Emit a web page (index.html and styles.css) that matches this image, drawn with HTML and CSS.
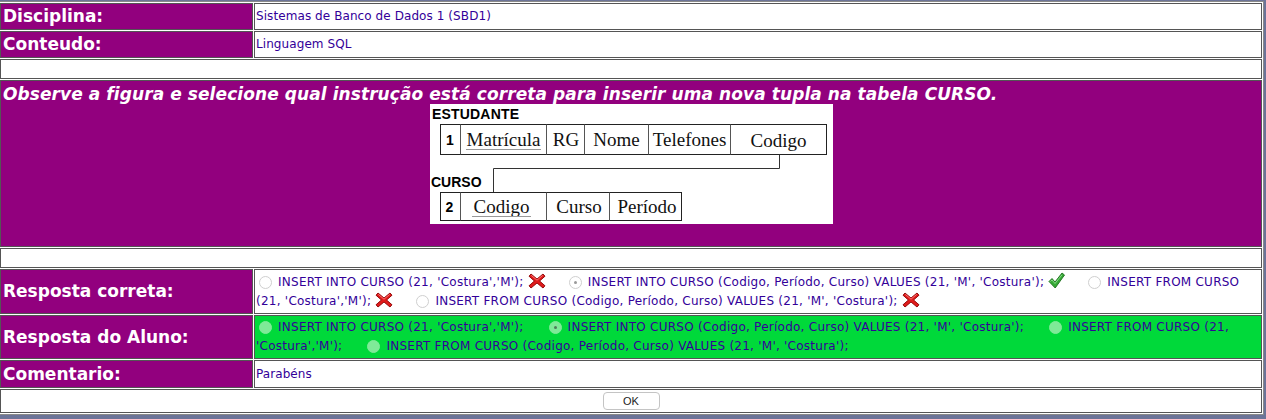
FILE: index.html
```html
<!DOCTYPE html>
<html lang="pt">
<head>
<meta charset="utf-8">
<title>Resposta</title>
<link rel="stylesheet" href="styles.css">
</head>
<body>
<div class="page">
<table class="sheet">
  <tr>
    <td class="lbl">Disciplina:</td>
    <td class="val">Sistemas de Banco de Dados 1 (SBD1)</td>
  </tr>
  <tr>
    <td class="lbl">Conteudo:</td>
    <td class="val">Linguagem SQL</td>
  </tr>
  <tr>
    <td class="blank" colspan="2">&nbsp;</td>
  </tr>
  <tr>
    <td class="question" colspan="2">
      <div class="qtext">Observe a figura e selecione qual instrução está correta para inserir uma nova tupla na tabela CURSO.</div>
      <div class="figure">
        <svg class="fig" width="403" height="120" viewBox="0 0 403 120">
          <rect width="403" height="120" fill="#fff"/>
          <text x="2" y="15" class="fl" textLength="87">ESTUDANTE</text>
          <rect x="10.5" y="20.5" width="386" height="30" fill="none" stroke="#222"/>
          <path d="M30.5 20.5V50.5M116.5 20.5V50.5M154.5 20.5V50.5M218.5 20.5V50.5M300.5 20.5V50.5" stroke="#555" fill="none"/>
          <text x="20" y="41" class="fn">1</text>
          <text x="73.5" y="41.5" class="ft">Matrícula</text>
          <line x1="36" y1="45.5" x2="111" y2="45.5" stroke="#999"/>
          <text x="136" y="41.5" class="ft">RG</text>
          <text x="186.5" y="41.5" class="ft">Nome</text>
          <text x="259.5" y="41.5" class="ft">Telefones</text>
          <text x="348.5" y="43" class="ft">Codigo</text>
          <path d="M349.5 50.5V64.5H63.5V88" stroke="#333" fill="none"/>
          <text x="1" y="83" class="fl">CURSO</text>
          <rect x="10.5" y="88.5" width="241" height="28" fill="none" stroke="#222"/>
          <path d="M30.5 88.5V116.5M116.5 88.5V116.5M179.5 88.5V116.5" stroke="#555" fill="none"/>
          <text x="19.5" y="108" class="fn">2</text>
          <text x="71.5" y="109" class="ft">Codigo</text>
          <line x1="42" y1="112.5" x2="101" y2="112.5" stroke="#999"/>
          <text x="149" y="109" class="ft">Curso</text>
          <text x="217" y="109" class="ft">Período</text>
        </svg>
      </div>
    </td>
  </tr>
  <tr>
    <td class="blank" colspan="2">&nbsp;</td>
  </tr>
  <tr>
    <td class="lbl">Resposta correta:</td>
    <td class="val ans"><span class="radio first"></span>INSERT INTO CURSO (21, 'Costura','M'); <svg class="ico" width="18" height="16" viewBox="0 0 18 16"><path d="M3 1L9 6L15 1L17 3.2L11.6 8L17 12.8L15 15L9 10L3 15L1 12.8L6.4 8L1 3.2Z" fill="#e01b1b" stroke="#8c0000" stroke-width="0.9" stroke-linejoin="round"/><path d="M3.3 2.4L9 7.2L14.7 2.4" fill="none" stroke="#ff7a7a" stroke-width="0.9"/></svg> <span class="radio checked"></span>INSERT INTO CURSO (Codigo, Período, Curso) VALUES (21, 'M', 'Costura'); <svg class="ico" width="17" height="17" viewBox="0 0 17 17"><path d="M1 9.5L4 6.5L7 10L14 1L16.5 3L7.2 16Z" fill="#35a935" stroke="#1c6e1c" stroke-width="0.9" stroke-linejoin="round"/><path d="M2.5 9.5L4 8L7 11.5L14 2.8" fill="none" stroke="#8fe08f" stroke-width="0.9"/></svg> <span class="radio"></span>INSERT FROM CURSO (21, 'Costura','M'); <svg class="ico" width="18" height="16" viewBox="0 0 18 16"><path d="M3 1L9 6L15 1L17 3.2L11.6 8L17 12.8L15 15L9 10L3 15L1 12.8L6.4 8L1 3.2Z" fill="#e01b1b" stroke="#8c0000" stroke-width="0.9" stroke-linejoin="round"/><path d="M3.3 2.4L9 7.2L14.7 2.4" fill="none" stroke="#ff7a7a" stroke-width="0.9"/></svg> <span class="radio"></span>INSERT FROM CURSO (Codigo, Período, Curso) VALUES (21, 'M', 'Costura'); <svg class="ico" width="18" height="16" viewBox="0 0 18 16"><path d="M3 1L9 6L15 1L17 3.2L11.6 8L17 12.8L15 15L9 10L3 15L1 12.8L6.4 8L1 3.2Z" fill="#e01b1b" stroke="#8c0000" stroke-width="0.9" stroke-linejoin="round"/><path d="M3.3 2.4L9 7.2L14.7 2.4" fill="none" stroke="#ff7a7a" stroke-width="0.9"/></svg></td>
  </tr>
  <tr>
    <td class="lbl">Resposta do Aluno:</td>
    <td class="val ans green"><span class="radio first"></span>INSERT INTO CURSO (21, 'Costura','M'); <span class="radio wide checked"></span>INSERT INTO CURSO (Codigo, Período, Curso) VALUES (21, 'M', 'Costura'); <span class="radio wide"></span>INSERT FROM CURSO (21, 'Costura','M'); <span class="radio wide"></span>INSERT FROM CURSO (Codigo, Período, Curso) VALUES (21, 'M', 'Costura');</td>
  </tr>
  <tr>
    <td class="lbl tall">Comentario:</td>
    <td class="val">Parabéns</td>
  </tr>
  <tr>
    <td class="foot" colspan="2"><button class="ok" type="button">OK</button></td>
  </tr>
</table>
</div>
</body>
</html>
```

FILE: styles.css
```css
html, body {
  margin: 0;
  padding: 0;
}

body {
  background: #6c7498;
  font-family: "DejaVu Sans", Verdana, sans-serif;
  height: 419px;
  overflow: hidden;
}

.page {
  padding-top: 1px;
}

.sheet {
  width: 1266px;
  margin-left: -2px;
  border-collapse: separate;
  border-spacing: 1px;
  border: 1px solid #8a8a8a;
  background: #fff;
}

.sheet td {
  border: 1px solid #555;
  padding: 2px;
  vertical-align: middle;
}

.lbl {
  width: 253px;
  box-sizing: border-box;
  background: #92007e;
  color: #fff;
  font-weight: bold;
  font-size: 17px;
  line-height: 21px;
  white-space: nowrap;
}

.lbl.tall {
  line-height: 22px;
}

.val {
  background: #fff;
  color: #330099;
  font-size: 12px;
  line-height: 21px;
  letter-spacing: 0.08px;
  padding-left: 1px !important;
}

.blank {
  font-size: 12px;
  line-height: 14px;
}

.question {
  background: #92007e;
  color: #fff;
  padding-top: 3px !important;
  padding-bottom: 22px !important;
}

.qtext {
  font-weight: bold;
  font-style: italic;
  font-size: 17px;
  line-height: 20px;
  letter-spacing: 0.08px;
}

.figure {
  display: flex;
  justify-content: center;
}

.fig {
  display: block;
}

.fl {
  font-family: "Liberation Sans", Arial, sans-serif;
  font-weight: bold;
  font-size: 14px;
  fill: #000;
}

.fn {
  font-family: "Liberation Sans", Arial, sans-serif;
  font-weight: bold;
  font-size: 14px;
  fill: #000;
  text-anchor: middle;
}

.ft {
  font-family: "Liberation Serif", "Times New Roman", serif;
  font-size: 19px;
  fill: #111;
  text-anchor: middle;
}

.ans {
  line-height: 19px;
  letter-spacing: 0.25px;
}

.green {
  background: #00d93a;
}

.radio {
  display: inline-block;
  box-sizing: border-box;
  width: 13px;
  height: 13px;
  border-radius: 50%;
  border: 1px solid #cfcfcf;
  background: #fff;
  vertical-align: -3px;
  margin: 0 6px 0 19px;
  position: relative;
}

.radio.first {
  margin-left: 3px;
}

.radio.wide {
  margin-left: 21px;
}

.radio.checked::after {
  content: "";
  position: absolute;
  left: 4px;
  top: 4px;
  width: 3px;
  height: 3px;
  border-radius: 50%;
  background: #9a9a9a;
}

.green .radio {
  background: #7fea98;
  border-color: #7fea98;
}

.green .radio.checked::after {
  background: #4f7d5a;
}

.ico {
  display: inline-block;
  vertical-align: -3px;
}

.foot {
  text-align: center;
  padding: 2px !important;
  line-height: 0;
}

.ok {
  width: 57px;
  height: 18px;
  padding: 0;
  margin: 0;
  border: 1px solid #c4c4c4;
  border-radius: 4px;
  background: #fff;
  color: #222;
  font-family: "Liberation Sans", Arial, sans-serif;
  font-size: 11px;
  line-height: 16px;
}
```
